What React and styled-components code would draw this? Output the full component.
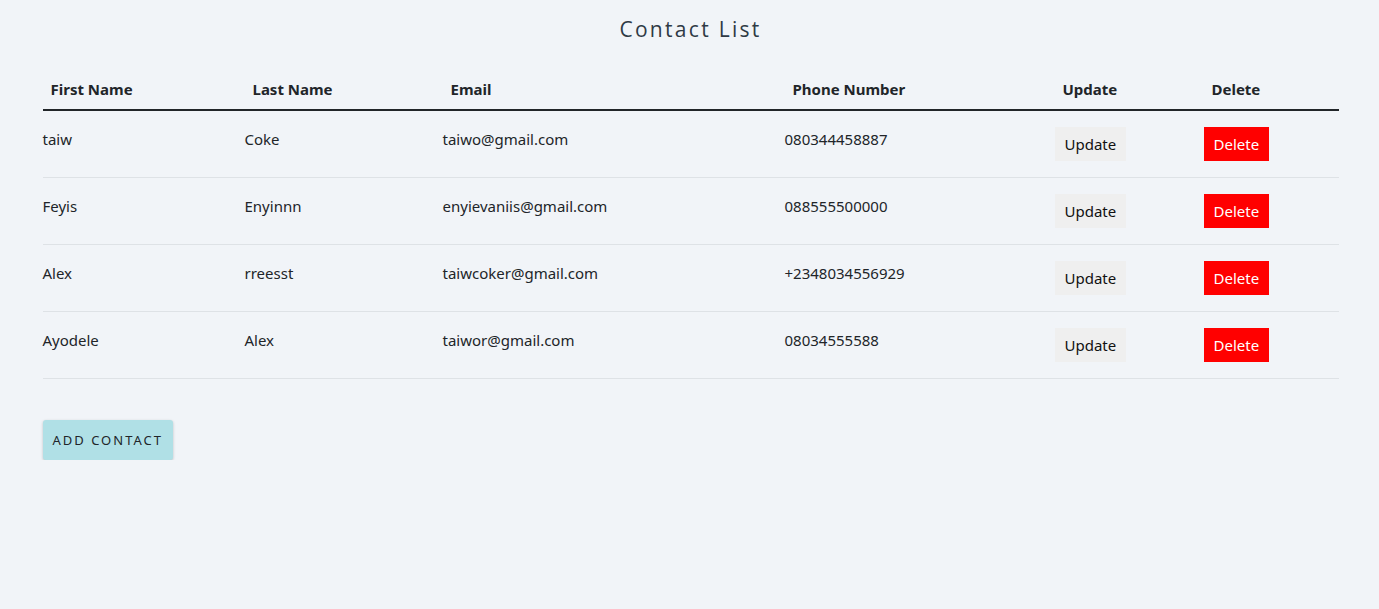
import React from "react";
import styled, { createGlobalStyle } from "styled-components";

const Global = createGlobalStyle`
  html, body { margin: 0; padding: 0; }
  body {
    background: #f1f4f8;
    font-family: "Noto Sans", "Open Sans", sans-serif;
    font-size: 15px;
    color: #212529;
  }
`;

const Page = styled.div`
  width: 1296px;
  margin: 0 auto;
  padding-left: 2px;
`;

const Title = styled.h2`
  margin: 0;
  padding: 16px 0 0;
  height: 53px;
  box-sizing: border-box;
  text-align: center;
  font-family: "Open Sans", sans-serif;
  font-weight: 400;
  font-size: 21px;
  letter-spacing: 2.3px;
  color: #2f3a45;
  line-height: 26px;
`;

const Table = styled.table`
  width: 100%;
  border-collapse: collapse;
  margin-top: 16px;
`;

const Th = styled.th`
  text-align: left;
  font-weight: 700;
  padding: 8px;
  line-height: 24px;
  border-bottom: 2px solid #212529;
`;

const Td = styled.td`
  padding: 16px 0;
  line-height: 24px;
  vertical-align: top;
  border-bottom: 1px solid #dee2e6;
`;

const ActionButton = styled.button`
  font-family: inherit;
  font-size: 15px;
  line-height: 24px;
  height: 34px;
  padding: 5px 10px;
  border: none;
  border-radius: 0;
  cursor: pointer;
  background: ${(p) => (p.$danger ? "#ff0000" : "#efefef")};
  color: ${(p) => (p.$danger ? "#fff" : "#111")};
`;

const AddButton = styled.button`
  margin-top: 41px;
  height: 40px;
  padding: 0 10px;
  border: none;
  border-radius: 3px;
  background: #b0e0e6;
  box-shadow: 0 1px 3px rgba(0, 0, 0, 0.22);
  font-family: inherit;
  font-size: 13px;
  letter-spacing: 2px;
  text-transform: uppercase;
  color: #212529;
  cursor: pointer;
`;

const contacts = [
  ["taiw", "Coke", "taiwo@gmail.com", "080344458887"],
  ["Feyis", "Enyinnn", "enyievaniis@gmail.com", "088555500000"],
  ["Alex", "rreesst", "taiwcoker@gmail.com", "+2348034556929"],
  ["Ayodele", "Alex", "taiwor@gmail.com", "08034555588"],
];

const widths = [202, 198, 342, 270, 149, 135];

export default function App() {
  return (
    <>
      <Global />
      <Page>
        <Title>Contact List</Title>
        <Table>
          <colgroup>
            {widths.map((w, i) => (
              <col key={i} style={{ width: w }} />
            ))}
          </colgroup>
          <thead>
            <tr>
              <Th>First Name</Th>
              <Th>Last Name</Th>
              <Th>Email</Th>
              <Th>Phone Number</Th>
              <Th>Update</Th>
              <Th>Delete</Th>
            </tr>
          </thead>
          <tbody>
            {contacts.map((c, i) => (
              <tr key={i}>
                <Td>{c[0]}</Td>
                <Td>{c[1]}</Td>
                <Td>{c[2]}</Td>
                <Td>{c[3]}</Td>
                <Td>
                  <ActionButton>Update</ActionButton>
                </Td>
                <Td>
                  <ActionButton $danger>Delete</ActionButton>
                </Td>
              </tr>
            ))}
          </tbody>
        </Table>
        <AddButton>Add Contact</AddButton>
      </Page>
    </>
  );
}
